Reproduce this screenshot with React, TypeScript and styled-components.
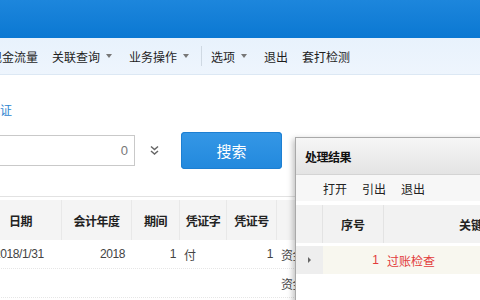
import * as React from "react"
import styled, { createGlobalStyle } from "styled-components"

const Global = createGlobalStyle`
  html, body {
    margin: 0;
    padding: 0;
    background: #fff;
  }
  body {
    width: 480px;
    height: 300px;
    overflow: hidden;
    font-family: "Noto Sans CJK SC", "Microsoft YaHei", sans-serif;
    font-size: 12px;
    color: #222;
  }
`

const Page = styled.div`
  position: relative;
  width: 480px;
  height: 300px;
  overflow: hidden;
`

const TitleBar = styled.div`
  height: 38px;
  background: linear-gradient(180deg, #1d86dc 0%, #0b78d2 100%);
`

const Toolbar = styled.div`
  height: 36px;
  display: flex;
  align-items: center;
  margin-left: -17px;
  background: linear-gradient(180deg, #e8f2fc 0%, #eef5fd 100%);
  border-bottom: 1px solid #dce8f4;
`

const ToolItem = styled.div`
  display: flex;
  align-items: center;
  gap: 6px;
  padding: 0 7px;
  color: #1e1e1e;
  font-size: 12px;
  white-space: nowrap;
`

const Caret = styled.span`
  width: 0;
  height: 0;
  margin-right: 3px;
  border-left: 3px solid transparent;
  border-right: 3px solid transparent;
  border-top: 4px solid #777;
`

const ToolSep = styled.div`
  width: 1px;
  height: 20px;
  background: #cfd9e3;
  margin: 0 2px;
`

const Body = styled.div`
  padding-top: 26px;
`

const LinkText = styled.div`
  margin-left: -12px;
  color: #2f86d0;
  font-size: 12px;
  height: 18px;
  line-height: 18px;
`

const SearchRow = styled.div`
  display: flex;
  align-items: center;
  margin-top: 12px;
  height: 38px;
`

const Input = styled.div`
  width: 145px;
  margin-left: -10px;
  height: 31px;
  box-sizing: border-box;
  border: 1px solid #c9c9c9;
  display: flex;
  align-items: center;
  justify-content: flex-end;
  padding-right: 6px;
  color: #777;
  font-family: "Liberation Sans", Arial, sans-serif;
  font-size: 13px;
`

const ExpandIcon = styled.div`
  width: 38px;
  margin-right: 8px;
  display: flex;
  justify-content: center;
  svg {
    display: block;
  }
`

const SearchButton = styled.div`
  width: 101px;
  height: 37px;
  border-radius: 4px;
  background: linear-gradient(180deg, #3597e6 0%, #2289dd 100%);
  box-shadow: inset 0 0 0 1px #1d7fd2;
  color: #fff;
  font-size: 15px;
  display: flex;
  align-items: center;
  justify-content: center;
`

const Table = styled.div`
  margin-top: 27px;
  margin-left: -20px;
  border-top: 1px solid #e2e2e2;
`

const cols = "82px 70px 48px 47px 50px 1fr"

const HeadRow = styled.div`
  display: grid;
  grid-template-columns: ${cols};
  height: 40px;
  margin-top: 3px;
  background: #f4f4f4;
`

const HeadCell = styled.div`
  display: flex;
  align-items: center;
  justify-content: center;
  font-weight: 700;
  font-size: 12px;
  color: #222;
  border-right: 1px solid #e8e8e8;
  letter-spacing: -0.5px;
`

const Row = styled.div`
  display: grid;
  grid-template-columns: ${cols};
  height: 28px;
  border-bottom: 1px dotted #e6e6e6;
`

const Cell = styled.div<{ $align?: "left" | "right" | "center" }>`
  display: flex;
  align-items: center;
  justify-content: ${(p) =>
    p.$align === "right" ? "flex-end" : p.$align === "center" ? "center" : "flex-start"};
  padding: 0 4px;
  color: #444;
  font-family: "Liberation Sans", "Noto Sans CJK SC", sans-serif;
  font-size: 12px;
  letter-spacing: -0.4px;
  white-space: nowrap;
  overflow: hidden;
`

const Dialog = styled.div`
  position: absolute;
  left: 295px;
  top: 137px;
  width: 200px;
  height: 175px;
  background: #fff;
  border: 1px solid #a9a9a9;
  box-shadow: -2px 2px 6px rgba(0, 0, 0, 0.25);
`

const DialogTitle = styled.div`
  height: 36px;
  display: flex;
  align-items: center;
  padding-left: 9px;
  background: linear-gradient(180deg, #f6f6f6 0%, #e4e4e4 100%);
  border-bottom: 1px solid #d4d4d4;
  font-weight: 700;
  font-size: 12px;
  letter-spacing: -0.5px;
  color: #111;
`

const DialogTools = styled.div`
  height: 26px;
  display: flex;
  align-items: center;
  gap: 15px;
  padding-left: 27px;
  background: #f7f7f7;
  font-size: 12px;
  color: #222;
`

const gridCols = "27px 61px 1fr"

const GridHead = styled.div`
  display: grid;
  grid-template-columns: ${gridCols};
  height: 38px;
  margin-top: 4px;
  background: #f2f2f2;
`

const GridHeadCell = styled.div<{ $start?: boolean }>`
  display: flex;
  align-items: center;
  justify-content: ${(p) => (p.$start ? "flex-start" : "center")};
  padding-left: ${(p) => (p.$start ? 75 : 0)}px;
  font-weight: 700;
  font-size: 12px;
  color: #222;
  border-right: 1px solid #e3e3e3;
`

const GridRow = styled.div`
  display: grid;
  grid-template-columns: ${gridCols};
  height: 28px;
  margin-top: 3px;
  background: #f8f7ef;
`

const RowMarker = styled.div`
  display: flex;
  align-items: center;
  justify-content: center;
  background: #eeeeee;
  &::after {
    content: "";
    width: 0;
    height: 0;
    border-top: 3px solid transparent;
    border-bottom: 3px solid transparent;
    border-left: 3px solid #666;
  }
`

const RedCell = styled.div<{ $align?: "left" | "right" }>`
  display: flex;
  align-items: center;
  justify-content: ${(p) => (p.$align === "right" ? "flex-end" : "flex-start")};
  padding: 0 5px 0 3px;
  color: #e23b3b;
  font-size: 12px;
  font-family: "Liberation Sans", "Noto Sans CJK SC", sans-serif;
`

const menu = [
  { label: "现金流量", caret: false },
  { label: "关联查询", caret: true },
  { label: "业务操作", caret: true },
]

export default function App() {
  return (
    <Page>
      <Global />
      <TitleBar />
      <Toolbar>
        {menu.map((m) => (
          <ToolItem key={m.label}>
            {m.label}
            {m.caret && <Caret />}
          </ToolItem>
        ))}
        <ToolSep />
        <ToolItem>
          选项
          <Caret />
        </ToolItem>
        <ToolItem>退出</ToolItem>
        <ToolItem>套打检测</ToolItem>
      </Toolbar>
      <Body>
        <LinkText>凭证</LinkText>
        <SearchRow>
          <Input>0</Input>
          <ExpandIcon>
            <svg width="9" height="11" viewBox="0 0 9 11">
              <path
                d="M1 1.5 L4.5 4.5 L8 1.5 M1 6 L4.5 9 L8 6"
                fill="none"
                stroke="#666"
                strokeWidth="1.5"
              />
            </svg>
          </ExpandIcon>
          <SearchButton>搜索</SearchButton>
        </SearchRow>
        <Table>
          <HeadRow>
            <HeadCell>日期</HeadCell>
            <HeadCell>会计年度</HeadCell>
            <HeadCell>期间</HeadCell>
            <HeadCell>凭证字</HeadCell>
            <HeadCell>凭证号</HeadCell>
            <HeadCell />
          </HeadRow>
          <Row>
            <Cell style={{ paddingLeft: 14 }}>2018/1/31</Cell>
            <Cell $align="right" style={{ paddingRight: 7 }}>2018</Cell>
            <Cell $align="right">1</Cell>
            <Cell>付</Cell>
            <Cell $align="right">1</Cell>
            <Cell>资金</Cell>
          </Row>
          <Row>
            <Cell />
            <Cell />
            <Cell />
            <Cell />
            <Cell />
            <Cell>资金</Cell>
          </Row>
        </Table>
      </Body>
      <Dialog>
        <DialogTitle>处理结果</DialogTitle>
        <DialogTools>
          <span>打开</span>
          <span>引出</span>
          <span>退出</span>
        </DialogTools>
        <GridHead>
          <GridHeadCell />
          <GridHeadCell>序号</GridHeadCell>
          <GridHeadCell $start>关键</GridHeadCell>
        </GridHead>
        <GridRow>
          <RowMarker />
          <RedCell $align="right">1</RedCell>
          <RedCell>过账检查</RedCell>
        </GridRow>
      </Dialog>
    </Page>
  )
}
